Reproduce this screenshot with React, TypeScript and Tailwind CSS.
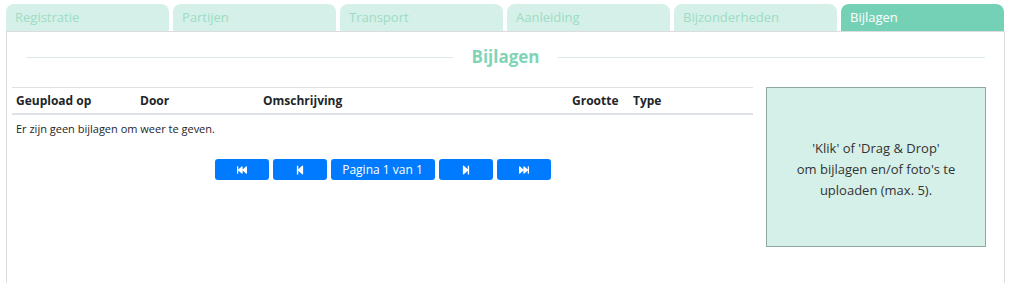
import React from 'react';
import { FaFastBackward, FaStepBackward, FaStepForward, FaFastForward } from 'react-icons/fa';

const tabs = ['Registratie', 'Partijen', 'Transport', 'Aanleiding', 'Bijzonderheden', 'Bijlagen'];

const App: React.FC = () => {
  return (
    <div
      className="h-[283px] w-[1029px] overflow-hidden bg-white px-[6px] pt-[4px] text-[#212529]"
      style={{ fontFamily: '"Open Sans", "Noto Sans", sans-serif' }}
    >
      {/* Tabs */}
      <div className="flex w-[998px] gap-[4px]">
        {tabs.map((tab, i) => {
          const active = i === tabs.length - 1;
          return (
            <div
              key={tab}
              className={
                active
                  ? 'h-[27px] flex-1 rounded-t-[8px] bg-[#75d1b6] pl-[9px] pt-[4px] text-[13px] leading-[18px] text-white'
                  : 'h-[27px] flex-1 rounded-t-[8px] bg-[#d5f0e8] pl-[9px] pt-[4px] text-[13px] leading-[18px] text-[#9edcc5]'
              }
            >
              {tab}
            </div>
          );
        })}
      </div>

      {/* Panel */}
      <div className="h-[260px] w-[999px] border border-b-0 border-[#dcdcdc] px-[5px]">
        {/* Heading */}
        <div className="flex items-center px-[14px] pt-[13px]">
          <div className="h-px flex-1 bg-[#d8ece5]" />
          <div className="px-[18px] text-[17px] font-bold leading-[24px] text-[#7fd4b8]">Bijlagen</div>
          <div className="h-px flex-1 bg-[#d8ece5]" />
        </div>

        <div className="mt-[18px] flex gap-[13px]">
          {/* Table */}
          <div className="w-[741px]">
            <div className="flex h-[28px] items-center border-y-2 border-t border-[#dee2e6] text-[12px] font-bold">
              <div className="w-[128px] pl-[4px]">Geupload op</div>
              <div className="w-[123px]">Door</div>
              <div className="w-[309px]">Omschrijving</div>
              <div className="w-[61px]">Grootte</div>
              <div>Type</div>
            </div>
            <div className="pl-[4px] pt-[6px] text-[11px] leading-[16px]">Er zijn geen bijlagen om weer te geven.</div>

            <div className="mt-[22px] flex justify-center gap-[4px]">
              <button className="flex h-[21px] w-[54px] items-center justify-center rounded-[3px] bg-[#007bff] text-white">
                <FaFastBackward className="h-[10px] w-[10px]" />
              </button>
              <button className="flex h-[21px] w-[54px] items-center justify-center rounded-[3px] bg-[#007bff] text-white">
                <FaStepBackward className="h-[10px] w-[10px]" />
              </button>
              <button className="flex h-[21px] w-[104px] items-center justify-center rounded-[3px] bg-[#007bff] text-[12px] text-white">
                Pagina 1 van 1
              </button>
              <button className="flex h-[21px] w-[54px] items-center justify-center rounded-[3px] bg-[#007bff] text-white">
                <FaStepForward className="h-[10px] w-[10px]" />
              </button>
              <button className="flex h-[21px] w-[54px] items-center justify-center rounded-[3px] bg-[#007bff] text-white">
                <FaFastForward className="h-[10px] w-[10px]" />
              </button>
            </div>
          </div>

          {/* Upload box */}
          <div className="flex h-[160px] w-[220px] items-center justify-center border border-[#8fa9a1] bg-[#d5f0e8] text-center text-[13px] leading-[21px] text-[#333]">
            <div className="pt-[4px]">
              'Klik' of 'Drag &amp; Drop'
              <br />
              om bijlagen en/of foto's te
              <br />
              uploaden (max. 5).
            </div>
          </div>
        </div>
      </div>
    </div>
  );
};

export default App;
